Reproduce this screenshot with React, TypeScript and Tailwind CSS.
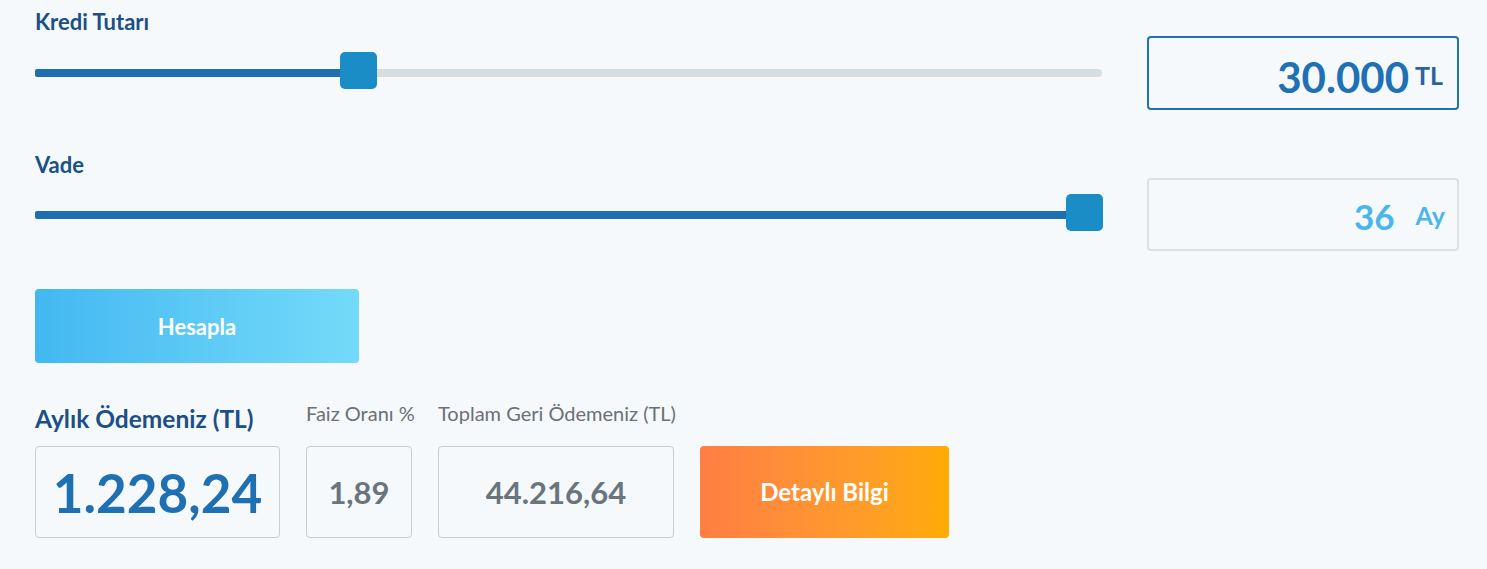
import React from "react";

function Slider({ fill, thumbLeft }: { fill: string; thumbLeft: number }) {
  return (
    <div className="relative h-[8px] w-full rounded-full bg-[#d6dee4]">
      <div className="absolute left-0 top-0 h-full rounded-l-[2px] bg-[#1e6fb2]" style={{ width: fill }} />
      <div
        className="absolute top-[-17px] h-[37px] w-[37px] rounded-[5px] bg-[#1a8dc6]"
        style={{ left: thumbLeft }}
      />
    </div>
  );
}

export default function App() {
  return (
    <div
      className="min-h-[569px] w-full bg-[#f5f9fc] pl-[35px] pr-[28px] pt-[8px]"
      style={{ fontFamily: "Lato, 'Noto Sans', sans-serif" }}
    >
      {/* Kredi Tutarı */}
      <div className="flex gap-[45px]">
        <div className="flex w-[1067px] flex-col">
          <div className="h-[28px] text-[22px] font-bold leading-[28px] text-[#1b4f86]">Kredi Tutarı</div>
          <div className="flex h-[74px] items-center">
            <Slider fill="320px" thumbLeft={305} />
          </div>
        </div>
        <div className="mt-[28px] flex h-[74px] w-[312px] items-center justify-end rounded-[4px] border-2 border-[#2271b1] pr-[14px]">
          <span className="mt-[8px] text-[42px] font-bold leading-none text-[#1f70b5]">30.000</span>
          <span className="ml-[6px] mt-[4px] text-[25px] font-bold leading-none text-[#2a62a0]">TL</span>
        </div>
      </div>

      {/* Vade */}
      <div className="mt-[42px] flex gap-[45px]">
        <div className="flex w-[1067px] flex-col">
          <div className="h-[26px] text-[22px] font-bold leading-[26px] text-[#1b4f86]">Vade</div>
          <div className="flex h-[73px] items-center">
            <Slider fill="100%" thumbLeft={1031} />
          </div>
        </div>
        <div className="mt-[26px] flex h-[73px] w-[312px] items-center justify-end rounded-[4px] border-2 border-[#dde1e4] pr-[12px]">
          <span className="mt-[4px] text-[35px] font-bold leading-none text-[#4bb6ec]">36</span>
          <span className="ml-[21px] mt-[2px] text-[25px] font-bold leading-none text-[#4bb6ec]">Ay</span>
        </div>
      </div>

      {/* Hesapla */}
      <button className="mt-[38px] flex h-[74px] w-[324px] items-center justify-center rounded-[4px] bg-gradient-to-r from-[#42b8f1] to-[#74daf9] text-[22px] font-bold text-white">
        Hesapla
      </button>

      {/* Results */}
      <div className="mt-[37px] grid grid-cols-[245px_106px_236px_249px] grid-rows-[46px_92px] gap-x-[26px]">
        <div className="flex items-end whitespace-nowrap pb-[12px] text-[24.5px] font-bold leading-[30px] text-[#1b4f86]">
          Aylık Ödemeniz (TL)
        </div>
        <div className="flex items-end whitespace-nowrap pb-[21px] text-[20px] leading-[24px] text-[#6b7075]">
          Faiz Oranı %
        </div>
        <div className="flex items-end whitespace-nowrap pb-[21px] text-[20px] leading-[24px] text-[#6b7075]">
          Toplam Geri Ödemeniz (TL)
        </div>
        <div />
        <div className="flex items-center justify-center rounded-[4px] border border-[#c9cdd1]">
          <span className="text-[53px] font-bold leading-none text-[#1f6fb3]">1.228,24</span>
        </div>
        <div className="flex items-center justify-center rounded-[4px] border border-[#c9cdd1]">
          <span className="text-[31px] font-bold leading-none text-[#6a747c]">1,89</span>
        </div>
        <div className="flex items-center justify-center rounded-[4px] border border-[#c9cdd1]">
          <span className="text-[31px] font-bold leading-none text-[#6a747c]">44.216,64</span>
        </div>
        <button className="flex items-center justify-center rounded-[4px] bg-gradient-to-r from-[#ff7e43] to-[#ffab00] text-[24px] font-bold text-white">
          Detaylı Bilgi
        </button>
      </div>
    </div>
  );
}
